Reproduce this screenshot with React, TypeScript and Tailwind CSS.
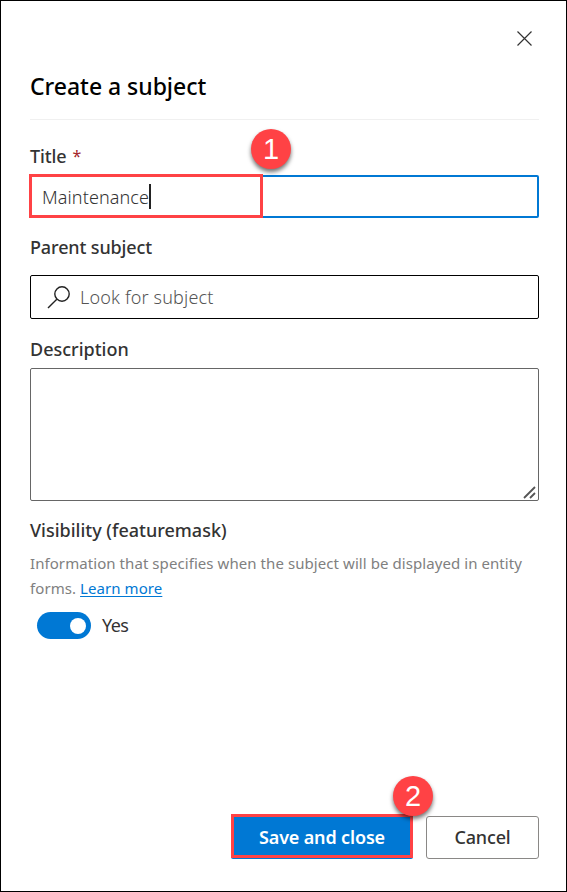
import type { ReactNode } from "react";

function Badge({ children, className }: { children: ReactNode; className: string }) {
  return (
    <span
      className={`absolute z-10 flex size-10 items-center justify-center rounded-full bg-[#ff4245] font-['Liberation_Sans',sans-serif] text-[29px] leading-none text-white shadow-[0_3px_4px_rgba(0,0,0,0.55)] ${className}`}
    >
      {children}
    </span>
  );
}

function Label({ children, className }: { children: ReactNode; className: string }) {
  return (
    <div className="flex h-6 items-center whitespace-nowrap text-[18px] font-medium text-[#333]">
      <span className={className}>{children}</span>
    </div>
  );
}

export default function App() {
  return (
    <main className="flex h-[892px] w-[567px] flex-col border border-black bg-white pl-[29px] pr-[27px] font-['Noto_Sans','Open_Sans',sans-serif] text-[#333]">
      <div className="flex h-[69px] shrink-0 justify-end pr-[6px] pt-[29px]">
        <svg width="17" height="17" viewBox="0 0 17 17" fill="none" stroke="#333" strokeWidth="1.2" aria-label="Close">
          <path d="M1.5 1.5 15.5 15.5M15.5 1.5 1.5 15.5" />
        </svg>
      </div>
      <h1 className="flex h-[50px] shrink-0 whitespace-nowrap border-b border-[#f0f0f0] text-[23px] font-medium leading-8 text-black">
        <span className="tracking-[-0.03px]">Create a subject</span>
      </h1>

      <div className="mt-[24px] flex gap-[6px]">
        <Label className="tracking-[-0.1px]">Title</Label>
        <span className="text-[16px] leading-6 text-[#a4262c]">*</span>
      </div>
      <div className="relative mt-[7px] flex h-[43px] shrink-0 items-center rounded-[2px] border-2 border-[#0078d4] pl-[10px]">
        <span className="relative top-px text-[18px] font-light tracking-[0.1px]">Maintenance</span>
        <span className="h-[25px] w-[2px] bg-[#222]" />
        <span className="absolute -left-[3px] -top-[3px] h-[44px] w-[234px] border-[3px] border-[#ff4245]" />
        <Badge className="left-[219px] top-[-48px]">1</Badge>
      </div>

      <div className="mt-[17px]">
        <Label className="tracking-[-0.13px]">Parent subject</Label>
      </div>
      <div className="mt-[16px] flex h-[44px] shrink-0 items-center rounded-[2px] border border-black pl-[16px]">
        <svg width="24" height="24" viewBox="0 0 24 24" fill="none" stroke="#222" strokeWidth="1.4">
          <circle cx="15" cy="9" r="7.2" />
          <path d="M9.8 14.2 1 23" />
        </svg>
        <span className="ml-[9px] text-[18px] font-light tracking-[0.17px] text-[#555]">Look for subject</span>
      </div>

      <div className="mt-[18px]">
        <Label className="tracking-normal">Description</Label>
      </div>
      <div className="mt-[7px] flex h-[133px] shrink-0 items-end justify-end rounded-[2px] border border-[#666] pb-px pr-[2px]">
        <svg width="13" height="13" viewBox="0 0 13 13" fill="none" stroke="#555" strokeWidth="1.8">
          <path d="M1 12 12 1M7 12 12 7" />
        </svg>
      </div>

      <div className="mt-[17px]">
        <Label className="tracking-normal">Visibility (featuremask)</Label>
      </div>
      <p className="mt-[9px] whitespace-nowrap text-[15px] leading-[25px] text-[#808080]">
        <span className="block tracking-[0.07px]">Information that specifies when the subject will be displayed in entity</span>
        <span className="block tracking-[0.07px]">
          forms. <a className="text-[#0078d4] underline underline-offset-2">Learn more</a>
        </span>
      </p>
      <div className="mt-[11px] flex items-center pl-[7px]">
        <span className="flex h-[27px] w-[54px] items-center justify-end rounded-full bg-[#0078d4] pr-[5px]">
          <span className="size-4 rounded-full bg-white" />
        </span>
        <span className="ml-[11px] text-[18px] leading-[27px] tracking-[-0.6px]">Yes</span>
      </div>

      <div className="mb-[32px] mt-auto flex items-end justify-between pl-[201px]">
        <div className="relative h-[45px] w-[182px] rounded-[2px] bg-[#0078d4]">
          <button className="flex h-[44px] w-[182px] items-center justify-center whitespace-nowrap border-[3px] border-[#ff4245] text-[18px] font-semibold text-white">
            <span className="relative top-px tracking-[-0.15px]">Save and close</span>
          </button>
          <Badge className="left-[162px] top-[-38px]">2</Badge>
        </div>
        <button className="flex h-[43px] w-[113px] items-center justify-center rounded-[3px] border border-[#8a8886] text-[18px] font-medium">
          <span className="tracking-[-0.15px]">Cancel</span>
        </button>
      </div>
    </main>
  );
}
